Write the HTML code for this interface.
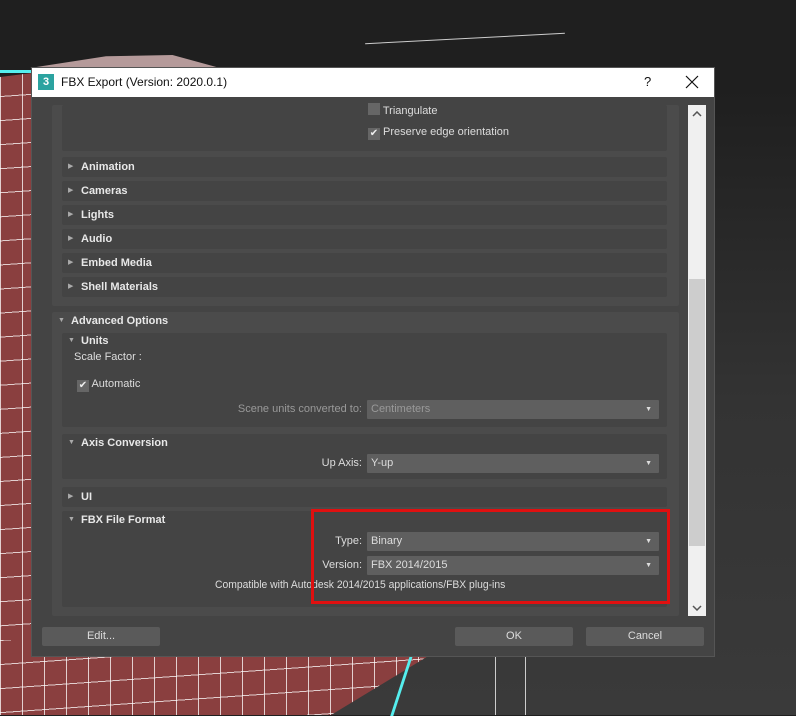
<!DOCTYPE html>
<html><head><style>
*{margin:0;padding:0;box-sizing:border-box}
body{width:796px;height:715px;overflow:hidden;position:relative;background:linear-gradient(180deg,#1f1f1f 0,#1f1f1f 90px,#333 400px,#3a3a3a 715px);font-family:"Liberation Sans",sans-serif;font-size:11px;color:#ddd}
.mesh{position:absolute;background-color:#8a3f3f;background-image:repeating-linear-gradient(90deg,rgba(255,255,255,.75) 0 1px,transparent 1px 22px),repeating-linear-gradient(176deg,rgba(255,255,255,.75) 0 1px,transparent 1px 24px)}
.a{position:absolute}
.dlg{left:31px;top:67px;width:684px;height:590px;background:#444;border:1px solid #555}
.title{left:0;top:0;width:682px;height:29px;background:#fff;color:#111;font-size:12px}
.grp{background:#4b4b4b;border-radius:2px}
.pan{background:#444;border-radius:2px}
.hdr{background:#444;border-radius:2px;height:20px;font-weight:bold;color:#e8e8e8;font-size:11px;line-height:20px;padding-left:19px}
.tri{position:absolute;left:6px;top:0;font-size:7px;color:#aaa;font-weight:normal}
.dd{background:#5f5f5f;height:19px;line-height:19px;padding-left:4px;color:#ddd;border-radius:1px}
.dd:after{content:"▼";position:absolute;right:7px;font-size:7px;color:#ddd}
.btn{background:#5a5a5a;border-radius:2px;height:19px;line-height:19px;text-align:center;color:#ddd}
.cb{width:12px;height:12px;background:#666;display:inline-block;font-size:10px;line-height:12px;text-align:center;color:#eee;vertical-align:-1px}
.lbl{text-align:right;color:#ddd}
</style></head><body>
<div class="mesh a" style="left:0;top:72px;width:40px;height:643px;clip-path:polygon(0 5px,100% 0,100% 100%,0 100%)"></div>
<div class="a" style="left:0;top:70px;width:40px;height:3px;background:#5ee"></div>
<div class="mesh a" style="left:0;top:640px;width:430px;height:75px;clip-path:polygon(0 0,100% 0,100% 15px,77% 100%,0 100%)"></div>
<div class="a" style="left:400px;top:656px;width:3px;height:60px;background:#5ee;transform:skewX(-18deg)"></div>
<div class="a" style="left:30px;top:55px;width:190px;height:13px;background:#b59a9a;clip-path:polygon(0 100%,40% 10%,75% 0,100% 100%)"></div>
<div class="a" style="left:365px;top:38px;width:200px;height:1px;background:#ccc;transform:rotate(-3deg)"></div>
<div class="a" style="left:495px;top:630px;width:1px;height:85px;background:#ccc"></div>
<div class="a" style="left:525px;top:630px;width:1px;height:85px;background:#ccc"></div>

<div class="a dlg">
 <div class="a title">
  <div class="a" style="left:6px;top:6px;width:16px;height:16px;background:#2ba3a0;color:#fff;font-weight:bold;font-size:11px;text-align:center;line-height:16px">3</div>
  <div class="a" style="left:29px;top:7px">FBX Export (Version: 2020.0.1)</div>
  <div class="a" style="left:612px;top:6px;font-size:13px">?</div>
  <svg class="a" style="left:653px;top:7px" width="14" height="14"><path d="M1 1L13 13M13 1L1 13" stroke="#111" stroke-width="1.2"/></svg>
 </div>
 <div class="a" style="left:656px;top:37px;width:18px;height:511px;background:#f0f0f0"></div>
 <div class="a" style="left:657px;top:211px;width:16px;height:267px;background:#cdcdcd"></div>
 <svg class="a" style="left:660px;top:43px" width="10" height="6"><path d="M1 5L5 1L9 5" stroke="#555" stroke-width="1.5" fill="none"/></svg>
 <svg class="a" style="left:660px;top:537px" width="10" height="6"><path d="M1 1L5 5L9 1" stroke="#555" stroke-width="1.5" fill="none"/></svg>

 <div class="a grp" style="left:20px;top:37px;width:627px;height:201px"></div>
 <div class="a pan" style="left:30px;top:37px;width:605px;height:46px"></div>
 <div class="a" style="left:336px;top:35px"><span class="cb"></span> Triangulate</div>
 <div class="a" style="left:336px;top:58px"><span class="cb">✔</span> Preserve edge orientation</div>
 <div class="a hdr" style="left:30px;top:89px;width:605px"><span class="tri">▶</span>Animation</div>
 <div class="a hdr" style="left:30px;top:113px;width:605px"><span class="tri">▶</span>Cameras</div>
 <div class="a hdr" style="left:30px;top:137px;width:605px"><span class="tri">▶</span>Lights</div>
 <div class="a hdr" style="left:30px;top:161px;width:605px"><span class="tri">▶</span>Audio</div>
 <div class="a hdr" style="left:30px;top:185px;width:605px"><span class="tri">▶</span>Embed Media</div>
 <div class="a hdr" style="left:30px;top:209px;width:605px"><span class="tri">▶</span>Shell Materials</div>

 <div class="a grp" style="left:20px;top:244px;width:627px;height:304px"></div>
 <div class="a hdr" style="left:20px;top:243px;width:400px;background:none"><span class="tri">▼</span>Advanced Options</div>
 <div class="a pan" style="left:30px;top:265px;width:605px;height:94px"></div>
 <div class="a hdr" style="left:30px;top:263px;width:200px;background:none"><span class="tri">▼</span>Units</div>
 <div class="a" style="left:42px;top:283px">Scale Factor :</div>
 <div class="a" style="left:45px;top:310px"><span class="cb">✔</span> Automatic</div>
 <div class="a lbl" style="left:150px;top:335px;width:180px;color:#999">Scene units converted to:</div>
 <div class="a dd" style="left:335px;top:332px;width:292px;color:#999">Centimeters</div>
 <div class="a pan" style="left:30px;top:366px;width:605px;height:45px"></div>
 <div class="a hdr" style="left:30px;top:365px;width:300px;background:none"><span class="tri">▼</span>Axis Conversion</div>
 <div class="a lbl" style="left:200px;top:389px;width:130px">Up Axis:</div>
 <div class="a dd" style="left:335px;top:386px;width:292px">Y-up</div>
 <div class="a hdr" style="left:30px;top:419px;width:605px"><span class="tri">▶</span>UI</div>
 <div class="a pan" style="left:30px;top:443px;width:605px;height:96px"></div>
 <div class="a hdr" style="left:30px;top:442px;width:300px;background:none"><span class="tri">▼</span>FBX File Format</div>
 <div class="a lbl" style="left:200px;top:467px;width:130px">Type:</div>
 <div class="a dd" style="left:335px;top:464px;width:292px">Binary</div>
 <div class="a lbl" style="left:200px;top:491px;width:130px">Version:</div>
 <div class="a dd" style="left:335px;top:488px;width:292px">FBX 2014/2015</div>
 <div class="a" style="left:183px;top:511px;transform:scaleX(0.94);transform-origin:left">Compatible with Autodesk 2014/2015 applications/FBX plug-ins</div>
 <div class="a" style="left:279px;top:441px;width:359px;height:95px;border:3px solid #e01010"></div>

 <div class="a btn" style="left:10px;top:559px;width:118px">Edit...</div>
 <div class="a btn" style="left:423px;top:559px;width:118px">OK</div>
 <div class="a btn" style="left:554px;top:559px;width:118px">Cancel</div>
</div>
</body></html>
